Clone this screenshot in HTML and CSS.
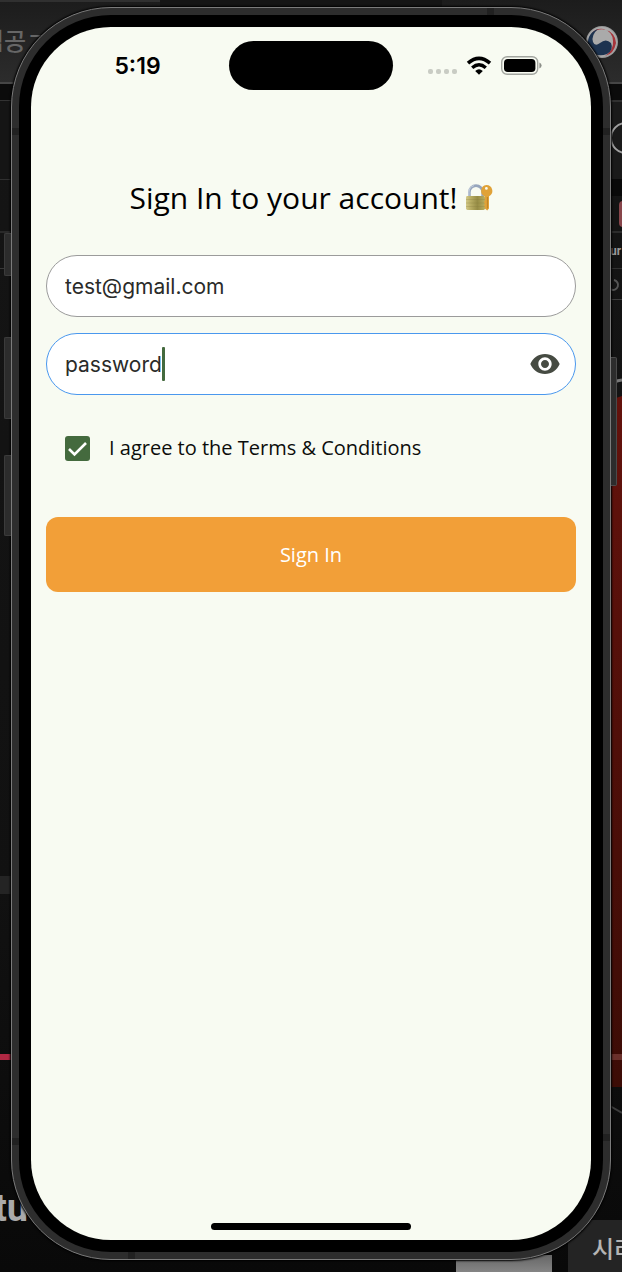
FILE: index.html
```html
<!DOCTYPE html>
<html lang="en">
<head>
<meta charset="utf-8">
<meta name="viewport" content="width=device-width, initial-scale=1">
<title>Sign In</title>
<link rel="stylesheet" href="styles.css">
</head>
<body>
<div class="desktop">
  <svg class="backdrop backdrop-left" width="160" height="1272" viewBox="0 0 160 1272" aria-hidden="true">
    <defs>
      <linearGradient id="bar" x1="0" x2="0" y1="0" y2="1"><stop offset="0" stop-color="#1c1c1c"/><stop offset="1" stop-color="#2c2c2c"/></linearGradient>
    </defs>
    <rect width="160" height="82" fill="url(#bar)"/>
    <rect width="160" height="2" fill="#303030"/>
    <rect y="82" width="160" height="2" fill="#464646"/>
    <rect y="84" width="160" height="16" fill="#0b0b0b"/>
    <rect y="100" width="160" height="1" fill="#333"/>
    <rect y="101" width="160" height="78" fill="#151515"/>
    <rect y="179" width="160" height="1" fill="#303030"/>
    <rect y="231" width="14" height="2" fill="#292929"/>
    <rect y="268" width="14" height="1" fill="#383838"/>
    <rect y="876" width="14" height="18" fill="#242424"/>
    <rect y="1054" width="14" height="6" fill="#b02843"/>
    <text class="ghost-ko" x="-18" y="50">립공ㄱ</text>
    <text class="ghost-bold" x="-6" y="1221">tu</text>
  </svg>
  <svg class="backdrop backdrop-right" width="180" height="1272" viewBox="0 0 180 1272" aria-hidden="true">
    <defs>
      <linearGradient id="red" x1="0" x2="0" y1="0" y2="1"><stop offset="0" stop-color="#64120c"/><stop offset="1" stop-color="#3c0c06"/></linearGradient>
      <linearGradient id="grey" x1="0" x2="0" y1="0" y2="1"><stop offset="0" stop-color="#666"/><stop offset="1" stop-color="#858585"/></linearGradient>
    </defs>
    <rect width="180" height="82" fill="url(#bar)"/>
    <rect y="82" width="180" height="2" fill="#464646"/>
    <rect y="84" width="180" height="16" fill="#0b0b0b"/>
    <rect y="100" width="180" height="2" fill="#303030"/>
    <rect y="102" width="180" height="77" fill="#1a1a1a"/>
    <rect y="179" width="180" height="17" fill="#090909"/>
    <rect y="231" width="180" height="2" fill="#2c2c2c"/>
    <rect y="268" width="180" height="1" fill="#303030"/>
    <rect y="299" width="180" height="1" fill="#3d3d3d"/>
    <circle cx="184" cy="138" r="15" fill="none" stroke="#a0a0a0" stroke-width="2"/>
    <rect x="177" y="201" width="20" height="26" rx="4" fill="#87454a"/>
    <path d="M172 280a5 5 0 1 1-5 2" fill="none" stroke="#555" stroke-width="2"/>
    <path d="M164 386Q172 381 180 380" fill="none" stroke="#777" stroke-width="3"/>
    <path d="M168 400L180 396V1087H168z" fill="url(#red)"/>
    <rect x="168" y="1054" width="12" height="6" fill="#6a302b"/>
    <path d="M168 1106l12 7" stroke="#3c3c3c" stroke-width="2"/>
    <rect x="14" y="1255" width="96" height="17" fill="url(#grey)"/>
    <rect x="126" y="1220" width="54" height="52" fill="#242424"/>
    <circle cx="160" cy="42" r="16" fill="#999"/>
    <circle cx="160" cy="42" r="15" fill="#aaa"/>
    <path d="M148 36A14 14 0 0 1 174 43Q172 54 163 56Q172 50 171 41A12 12 0 0 0 148 36z" fill="#a7343a"/>
    <path d="M146 44A14 14 0 0 1 156 29Q149 35 151 42Q153 47 158 43Q164 38 169 43Q172 50 165 54Q155 58 148 50z" fill="#1d3350"/>
    <text class="ghost-small" x="164" y="255">tur</text>
    <text class="ghost-ko ghost-light" x="150" y="1258">시리</text>
  </svg>

  <main class="phone">
    <span class="key key-action"></span>
    <span class="key key-up"></span>
    <span class="key key-down"></span>
    <span class="key key-power"></span>
    <span class="seam seam-top"></span>
    <span class="seam seam-bottom"></span>
    <span class="seam seam-right-high"></span>
    <span class="seam seam-right-low"></span>
    <span class="seam seam-left-high"></span>
    <span class="seam seam-left-low"></span>
    <div class="bezel">
      <div class="screen">
        <header class="status">
          <time class="clock">5:19</time>
          <span class="island"></span>
          <span class="indicators">
            <span class="signal"><i></i><i></i><i></i><i></i></span>
            <svg class="wifi" width="26" height="20" viewBox="0 0 26 20" role="img" aria-label="Wi-Fi">
              <path d="M2 7.2Q13-2.6 24 7.2" fill="none" stroke="#000" stroke-width="3.6"/>
              <path d="M6.2 11.8Q13 5.8 19.8 11.8" fill="none" stroke="#000" stroke-width="3.4"/>
              <path d="M9.2 14.9Q13 11.7 16.8 14.9L13 18.8z"/>
            </svg>
            <svg class="battery" width="41" height="19" viewBox="0 0 41 19" role="img" aria-label="Battery full">
              <rect x=".7" y=".7" width="36" height="17.6" rx="5.5" fill="none" stroke="#a2a59f" stroke-width="1.4"/>
              <rect x="3" y="3" width="31.4" height="13" rx="3.8"/>
              <path d="M38.4 6.4Q40.6 7.4 40.6 9.5T38.4 12.6z" fill="#8c8f89"/>
            </svg>
          </span>
        </header>

        <form class="signin">
          <h1 class="title">
            <span>Sign In to your account!</span>
            <svg class="lock" width="28" height="28" viewBox="0 0 28 28" role="img" aria-label="Locked with key">
              <defs>
                <linearGradient id="brass" x1="0" x2="1" y1="0" y2="0"><stop offset="0" stop-color="#d3c988"/><stop offset=".25" stop-color="#b8ad63"/><stop offset=".6" stop-color="#968c45"/><stop offset="1" stop-color="#b9ad5f"/></linearGradient>
              </defs>
              <path d="M4.4 14V8.2a6.6 6.6 0 0 1 13.2 0V14" fill="none" stroke="#97a6bd" stroke-width="2.6"/>
              <path d="M3.9 13V8.2a7 7 0 0 1 5-6.6" fill="none" stroke="#c9d3e2" stroke-width="1"/>
              <rect x="1" y="12" width="19" height="14" rx="1.4" fill="url(#brass)"/>
              <path d="M1 15.5h19M1 19h19M1 22.5h19" stroke="#82793c" stroke-opacity=".25"/>
              <path fill="#e0a238" fill-rule="evenodd" d="M21.3 1a5.9 5.9 0 0 1 2.7 11.2V24.6L22.2 26.4 19.8 24.6V22.6l-1-1 1-1.2v-1.2l-1-1 1-1.2V12.3A5.9 5.9 0 0 1 21.3 1zM21.4 3a1.4 1.4 0 1 0 0 2.8 1.4 1.4 0 0 0 0-2.8z"/>
              <path d="M22.4 13v11.5" stroke="#b97a1e" stroke-width=".8"/>
            </svg>
          </h1>

          <div class="fields">
            <div class="field">
              <input class="field-input" type="email" value="test@gmail.com" aria-label="Email">
            </div>
            <div class="field field-active">
              <input class="field-input field-input-fit" type="text" size="8" value="password" aria-label="Password">
              <span class="caret"></span>
              <button class="reveal" type="button" aria-label="Hide password">
                <svg width="32" height="32" viewBox="0 0 24 24"><path fill="#464b42" d="M12 4.5C7 4.5 2.73 7.61 1 12c1.73 4.39 6 7.5 11 7.5s9.27-3.11 11-7.5c-1.73-4.39-6-7.5-11-7.5zM12 17c-2.76 0-5-2.24-5-5s2.24-5 5-5 5 2.24 5 5-2.24 5-5 5zm0-8c-1.66 0-3 1.34-3 3s1.34 3 3 3 3-1.34 3-3-1.34-3-3-3z"/></svg>
              </button>
            </div>
          </div>

          <label class="terms">
            <input class="check" type="checkbox" checked>
            <span>I agree to the Terms &amp; Conditions</span>
          </label>

          <button class="submit" type="submit">Sign In</button>
        </form>

        <span class="home"></span>
      </div>
    </div>
  </main>
</div>
</body>
</html>
```
FILE: styles.css
```css
* { box-sizing: border-box; }

body {
  margin: 0;
  font-family: "Open Sans", "Noto Sans", sans-serif;
  color: #0c0d0b;
  background: #101010;
}

.desktop {
  position: relative;
  min-height: 100vh;
  padding: 7px 11px 12px;
  overflow: hidden;
  display: flex;
  background: linear-gradient(#151515, #111 70%, #090909);
}

.backdrop { position: absolute; top: 0; }
.backdrop-left { left: 0; }
.backdrop-right { right: 0; }
.ghost-ko { font: 500 24px "Noto Sans CJK KR", sans-serif; fill: #666; }
.ghost-light { fill: #b4b4b4; }
.ghost-bold { font: 700 38px Roboto, sans-serif; fill: #aaa; }
.ghost-small { font: 700 12px Roboto, sans-serif; fill: #999; }

.phone {
  position: relative;
  flex: 1;
  display: flex;
  padding: 7px;
  border: 1px solid #7b7b7b;
  border-radius: 100px;
  background: #2d2d2d;
  box-shadow: 0 0 2px 1px #000;
}

.key {
  position: absolute;
  left: -8px;
  width: 7px;
  background: #2c2c2c;
  border: 1px solid #3b3b3b;
  border-right: 0;
  border-radius: 2px 0 0 2px;
}
.key-action { top: 225px; height: 43px; }
.key-up { top: 329px; height: 82px; }
.key-down { top: 447px; height: 81px; }
.key-power {
  top: 349px;
  left: auto;
  right: -7px;
  width: 6px;
  height: 129px;
  border: 1px solid #4a4a4a;
  border-left: 0;
  border-radius: 0 2px 2px 0;
}

.seam { position: absolute; width: 7px; height: 7px; background: #212121; }
.seam-top { top: 0; right: 116px; }
.seam-bottom { bottom: 0; left: 116px; }
.seam-right-high { top: 120px; right: 0; }
.seam-right-low { bottom: 118px; right: 0; }
.seam-left-high { top: 120px; left: 0; }
.seam-left-low { bottom: 114px; left: 0; }

.bezel {
  position: relative;
  flex: 1;
  display: flex;
  padding: 12px;
  border-radius: 92px;
  background: #000;
}

.screen {
  flex: 1;
  display: flex;
  flex-direction: column;
  padding: 14px 15px 10px;
  border-radius: 80px;
  background: #f8fbf2;
}

.status {
  display: grid;
  grid-template-columns: 1fr 164px 1fr;
  align-items: center;
}
.clock {
  justify-self: center;
  font: 600 23px/28px Inter, sans-serif;
  color: #000;
}
.island { height: 49px; border-radius: 25px; background: #000; }
.indicators {
  display: flex;
  align-items: center;
  justify-content: flex-end;
  gap: 9px;
  padding-right: 34px;
}
.signal { display: flex; gap: 3px; padding-top: 12px; }
.signal i { width: 5px; height: 5px; border-radius: 2px; background: #c9ccc4; }

.signin { display: flex; flex-direction: column; }

.title {
  display: flex;
  align-items: center;
  justify-content: center;
  gap: 7px;
  margin: 88px 0 37px;
  font-size: 30px;
  line-height: 40px;
  font-weight: 400;
  color: #000;
}

.fields { display: flex; flex-direction: column; gap: 16px; }
.field {
  display: flex;
  align-items: center;
  height: 62px;
  padding: 0 14px 0 18px;
  border: 1px solid #9b9b9b;
  border-radius: 31px;
  background: #fff;
}
.field-active { border-color: #4a98ee; }
.field-input {
  flex: 1;
  min-width: 0;
  padding: 2px 0 0;
  border: 0;
  outline: 0;
  background: none;
  font: 400 21px/28px Inter, sans-serif;
  color: #2a2b29;
}
.field-input-fit { flex: none; field-sizing: content; }
.caret { width: 3px; height: 34px; border-radius: 1px; background: #446a3e; }
.reveal {
  display: flex;
  margin-left: auto;
  padding: 0;
  border: 0;
  background: none;
}

.terms {
  display: flex;
  align-items: center;
  gap: 19px;
  margin: 39px 19px 40px;
  font-size: 20px;
  line-height: 28px;
}
.check {
  appearance: none;
  width: 25px;
  height: 25px;
  margin: 0;
  border-radius: 3px;
  background: #446a3e url("data:image/svg+xml,%3Csvg xmlns='http://www.w3.org/2000/svg' viewBox='0 0 25 25'%3E%3Cpath d='M4 13l5.500 5.500L21 7' fill='none' stroke='%23fff' stroke-width='2.600'/%3E%3C/svg%3E") center / 100%;
}

.submit {
  height: 75px;
  margin-top: 15px;
  padding: 0;
  border: 0;
  border-radius: 12px;
  background: #f29f38;
  font: 400 20px/28px "Open Sans", "Noto Sans", sans-serif;
  color: #fff;
}

.home {
  align-self: center;
  width: 200px;
  height: 7px;
  margin-top: auto;
  border-radius: 4px;
  background: #000;
}
```
